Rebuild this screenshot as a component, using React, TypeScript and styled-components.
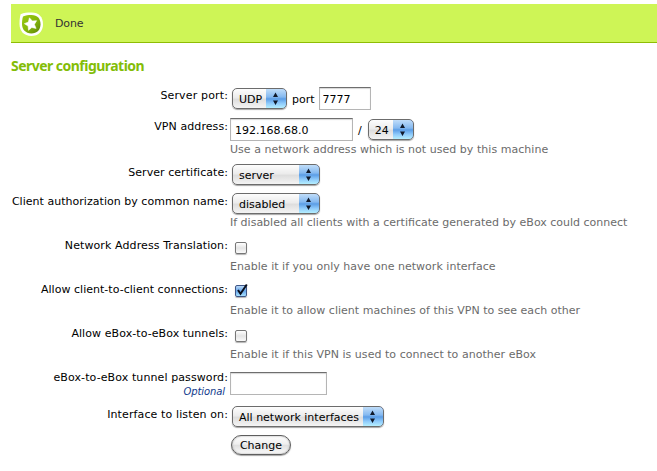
import React from "react";
import styled, { createGlobalStyle } from "styled-components";

const GlobalStyle = createGlobalStyle`
  * { box-sizing: border-box; }
  body {
    margin: 0;
    background: #fff;
    color: #000;
    font: 11px/14px Verdana, "DejaVu Sans", sans-serif;
    overflow: hidden;
  }
`;

const Page = styled.main`
  padding: 4px 0 0 11px;
  height: 471px;
`;

const Notice = styled.div`
  display: flex;
  align-items: center;
  height: 39px;
  padding-left: 8px;
  background: #cef556;
  border-bottom: 1px solid #8ebd05;
  color: #333;
  svg { margin-top: 2px; }
`;

const NoticeText = styled.span`
  margin: 1px 0 0 11px;
  letter-spacing: -0.1px;
`;

const Heading = styled.h2`
  margin: 14px 0 0;
  height: 20px;
  font: bold 14px/18px "Trebuchet MS", "Noto Sans", sans-serif;
  letter-spacing: -0.53px;
  color: #83bd07;
`;

const Form = styled.form`
  padding-top: 10px;
`;

const Row = styled.div<{ $h: number }>`
  display: grid;
  grid-template-columns: 217px 1fr;
  column-gap: 2px;
  height: ${(p) => p.$h}px;
`;

const Label = styled.label<{ $ls?: number; $top?: number }>`
  margin-top: ${(p) => p.$top ?? 3}px;
  justify-self: end;
  text-align: right;
  white-space: nowrap;
  letter-spacing: ${(p) => p.$ls ?? 0}px;
`;

const Optional = styled.small`
  display: block;
  margin-right: 3px;
  font-size: 10px;
  font-style: italic;
  letter-spacing: -0.1px;
  color: #113a8c;
`;

const Field = styled.div``;

const Line = styled.div<{ $h?: number }>`
  display: flex;
  align-items: flex-start;
  height: ${(p) => p.$h ?? 24}px;
`;

const Help = styled.p<{ $ls?: number }>`
  margin: 0;
  white-space: nowrap;
  color: #6b6b6b;
  letter-spacing: ${(p) => p.$ls ?? 0}px;
`;

const Inline = styled.span<{ $l: number; $r: number }>`
  margin: 6px ${(p) => p.$r}px 0 ${(p) => p.$l}px;
`;

const TextInput = styled.input<{ $w: number; $pad?: number }>`
  width: ${(p) => p.$w}px;
  height: 23px;
  padding: 2px 3px 0 ${(p) => p.$pad ?? 4}px;
  border: 1px solid #b5b5b5;
  border-top: 1px solid #6e6e6e;
  border-radius: 0;
  outline: none;
  font: inherit;
  color: #000;
  background: #fff;
  box-shadow: inset 0 1px 1px #d6d6d6;
`;

const Popup = styled.button<{ $w: number }>`
  display: flex;
  justify-content: space-between;
  width: ${(p) => p.$w}px;
  height: 21px;
  margin: 1px 0 0 2px;
  padding: 0;
  overflow: hidden;
  border: 1px solid #6c6c6c;
  border-radius: 5px;
  font: inherit;
  line-height: 20px;
  color: #000;
  white-space: nowrap;
  background: linear-gradient(#fdfdfd 0%, #ececec 45%, #dedede 55%, #f4f4f4 100%);
  box-shadow: 0 1px 1px rgba(0, 0, 0, 0.35);
`;

const PopupText = styled.span`
  padding: 1px 0 0 6px;
`;

const Arrows = styled.span`
  display: block;
  width: 21px;
  height: 21px;
  margin: -1px -1px 0 0;
  border: 1px solid #2d4f9f;
  border-left: 0;
  border-bottom-color: #4a6a96;
  border-radius: 0 5px 5px 0;
  background: linear-gradient(#c0ddf9 0%, #85b9f0 42%, #5b9de6 52%, #8fcbfb 76%, #b5efff 100%);
  svg { display: block; }
`;

const Check = styled.span<{ $on?: boolean }>`
  display: block;
  width: 12px;
  height: 12px;
  margin: ${(p) => (p.$on ? 5 : 6)}px 0 0 5px;
  border: 1px solid ${(p) => (p.$on ? "#3f5687" : "#777")};
  border-radius: 2px;
  background: ${(p) =>
    p.$on
      ? "linear-gradient(#b9d8f7, #67a6ea 50%, #a9e2ff)"
      : "linear-gradient(#fff, #e4e4e4 50%, #fafafa)"};
  box-shadow: 0 1px 1px rgba(0, 0, 0, 0.3);
  svg { display: block; margin: -3px 0 0 -1px; overflow: visible; }
`;

const Submit = styled.button`
  width: 60px;
  height: 20px;
  margin: 1px 0 0 1px;
  padding: 1px 0 0;
  border: 1px solid #5e5e5e;
  border-radius: 10px;
  font: inherit;
  line-height: 17px;
  color: #000;
  background: linear-gradient(#fefefe 0%, #efefef 45%, #e0e0e0 52%, #fbfbfb 100%);
  box-shadow: 0 1px 1px rgba(0, 0, 0, 0.35), inset 0 0 2px #999;
`;

function Select({ value, width }: { value: string; width: number }) {
  return (
    <Popup type="button" $w={width}>
      <PopupText>{value}</PopupText>
      <Arrows>
        <svg width="20" height="19" viewBox="0 0 20 19">
          <path d="M7 8L9.5 3.5L12 8ZM7 11.5H12L9.5 16Z" fill="#10192a" />
        </svg>
      </Arrows>
    </Popup>
  );
}

function StarBadge() {
  return (
    <svg width="25" height="25" viewBox="0 0 25 25">
      <defs>
        <linearGradient id="leaf" x1="0" y1="0" x2="1" y2="1">
          <stop offset="0" stopColor="#9aca12" />
          <stop offset="0.5" stopColor="#86b80a" />
          <stop offset="1" stopColor="#5c8407" />
        </linearGradient>
      </defs>
      <path
        d="M1.6 2.2C5 .8 8 .5 12.5.5C20 .5 24 5 24 12.3C24 19.5 19.5 24 12.3 24C5 24 .5 19 .5 12C.5 8 .8 5 1.6 2.2Z"
        fill="#fff"
      />
      <path
        d="M4 4.5C7 3.3 9 3 12.5 3C18.5 3 21.5 6.5 21.5 12.3C21.5 18 18 21.4 12.3 21.4C6.5 21.4 3 17.5 3 12C3 9 3.3 7 4 4.5Z"
        fill="url(#leaf)"
      />
      <path
        d="M10.4 5.8L13.3 9L17.6 8.7L15.4 12.4L17.1 16.4L12.8 15.5L9.5 18.3L9.1 14L5.4 11.7L9.4 10Z"
        fill="#fff"
        stroke="#fff"
        strokeWidth="0.6"
        strokeLinejoin="round"
      />
    </svg>
  );
}

export default function App() {
  return (
    <>
      <GlobalStyle />
      <Page>
        <Notice>
          <StarBadge />
          <NoticeText>Done</NoticeText>
        </Notice>
        <Heading>Server configuration</Heading>
        <Form>
          <Row $h={31}>
            <Label $top={2} $ls={0.15}>Server port:</Label>
            <Line>
              <Select value="UDP" width={55} />
              <Inline $l={5} $r={4}>port</Inline>
              <TextInput $w={52} $pad={3} defaultValue="7777" />
            </Line>
          </Row>
          <Row $h={45}>
            <Label $top={2} $ls={0.08}>VPN address:</Label>
            <Field>
              <Line $h={25}>
                <TextInput $w={123} defaultValue="192.168.68.0" />
                <Inline $l={5} $r={4}>/</Inline>
                <Select value="24" width={46} />
              </Line>
              <Help $ls={0.035}>Use a network address which is not used by this machine</Help>
            </Field>
          </Row>
          <Row $h={29}>
            <Label $ls={0.05}>Server certificate:</Label>
            <Line><Select value="server" width={88} /></Line>
          </Row>
          <Row $h={44}>
            <Label $ls={0.03}>Client authorization by common name:</Label>
            <Field>
              <Line><Select value="disabled" width={88} /></Line>
              <Help>If disabled all clients with a certificate generated by eBox could connect</Help>
            </Field>
          </Row>
          <Row $h={44}>
            <Label $ls={0.1}>Network Address Translation:</Label>
            <Field>
              <Line><Check role="checkbox" aria-checked="false" /></Line>
              <Help $ls={0.025}>Enable it if you only have one network interface</Help>
            </Field>
          </Row>
          <Row $h={44}>
            <Label $ls={0.03}>Allow client-to-client connections:</Label>
            <Field>
              <Line>
                <Check role="checkbox" aria-checked="true" $on>
                  <svg width="13" height="14" viewBox="0 0 13 14">
                    <path d="M3 7L5.5 10.8L11.8 1.5" fill="none" stroke="#0a0f1c" strokeWidth="2" />
                  </svg>
                </Check>
              </Line>
              <Help $ls={0.02}>Enable it to allow client machines of this VPN to see each other</Help>
            </Field>
          </Row>
          <Row $h={48}>
            <Label $ls={0.08}>Allow eBox-to-eBox tunnels:</Label>
            <Field>
              <Line><Check role="checkbox" aria-checked="false" /></Line>
              <Help $ls={0.035}>Enable it if this VPN is used to connect to another eBox</Help>
            </Field>
          </Row>
          <Row $h={33}>
            <Label $top={-1} $ls={0.1}>
              eBox-to-eBox tunnel password:
              <Optional>Optional</Optional>
            </Label>
            <Line><TextInput $w={97} type="password" /></Line>
          </Row>
          <Row $h={29}>
            <Label $ls={0.12}>Interface to listen on:</Label>
            <Line><Select value="All network interfaces" width={152} /></Line>
          </Row>
          <Row $h={24}>
            <span />
            <Line><Submit type="button">Change</Submit></Line>
          </Row>
        </Form>
      </Page>
    </>
  );
}
